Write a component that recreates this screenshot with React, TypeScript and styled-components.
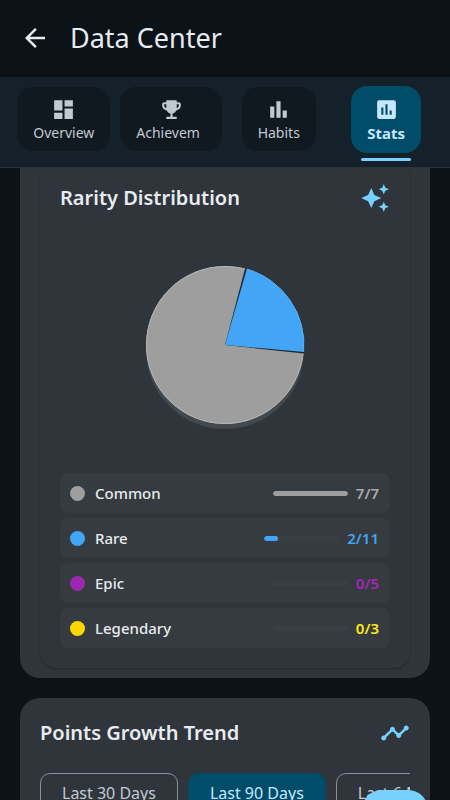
import React from "react";
import styled, { createGlobalStyle, css } from "styled-components";

const color = {
  page: "#0b1218",
  bar: "#15212a",
  tab: "#101820",
  active: "#004c69",
  accent: "#77d1ff",
  card: "#2f353b",
  row: "#353b3e",
  text: "#e7ecf1",
  muted: "#c3c9d1",
};

const GlobalStyle = createGlobalStyle`
  * { box-sizing: border-box; }
  body {
    margin: 0;
    background: ${color.page};
    color: ${color.text};
    font-family: "Noto Sans", "Open Sans", sans-serif;
  }
  button { font: inherit; color: inherit; border: 0; margin: 0; cursor: pointer; }
`;

const Screen = styled.div`
  height: 100vh;
  display: flex;
  flex-direction: column;
  overflow: hidden;
  position: relative;
`;

const AppBar = styled.header`
  flex: none;
  display: flex;
  align-items: center;
  gap: 20px;
  height: 77px;
  padding: 0 20px 2px;
`;

const IconButton = styled.button`
  display: flex;
  padding: 0;
  background: none;
`;

const PageTitle = styled.h1`
  margin: 0;
  font-size: 27px;
  line-height: 36px;
  font-weight: 400;
`;

const TabBar = styled.nav`
  flex: none;
  display: grid;
  grid-template-columns: repeat(4, 1fr);
  height: 91px;
  padding: 0 10px;
  background: ${color.bar};
  border-bottom: 1px solid #2a3339;
`;

const TabSlot = styled.div`
  display: flex;
  flex-direction: column;
  align-items: center;
  justify-content: center;
  position: relative;
  padding-bottom: 6px;
`;

const TabButton = styled.button<{ $active?: boolean }>`
  display: flex;
  flex-direction: column;
  align-items: center;
  gap: 1px;
  height: 64px;
  padding: 10px 16px 0;
  border-radius: 16px;
  background: ${color.tab};
  color: ${color.muted};
  font-size: 14px;
  line-height: 20px;
  ${(p) =>
    p.$active &&
    css`
      height: 67px;
      padding-top: 11px;
      background: ${color.active};
      color: #c5e8ff;
      font-size: 15px;
      font-weight: 700;
    `}
`;

const TabLabel = styled.span<{ $wide?: boolean }>`
  min-width: ${(p) => (p.$wide ? "70px" : "0")};
  text-align: left;
`;

const Indicator = styled.span`
  position: absolute;
  bottom: 6px;
  width: 50px;
  height: 3px;
  border-radius: 2px;
  background: ${color.accent};
`;

const Content = styled.main`
  flex: 1;
  min-height: 0;
  display: flex;
  flex-direction: column;
  gap: 20px;
  padding: 0 20px;
  overflow: hidden;
`;

const Card = styled.section<{ $continued?: boolean }>`
  flex: none;
  padding: ${(p) => (p.$continued ? "0 20px 10px" : "20px")};
  border-radius: ${(p) => (p.$continued ? "0 0 20px 20px" : "20px")};
  background: ${color.card};
`;

const Panel = styled.div`
  padding: 15px 20px 20px;
  border-radius: 8px 8px 16px 16px;
  background: ${color.card};
  box-shadow: 0 1px 2px rgba(0, 0, 0, 0.25);
`;

const CardHeader = styled.div`
  display: flex;
  align-items: center;
  justify-content: space-between;
  height: 30px;
`;

const CardTitle = styled.h2`
  margin: 0;
  font-size: 20px;
  line-height: 30px;
  font-weight: 600;
`;

const ChartArea = styled.div`
  display: flex;
  justify-content: center;
  padding: 50px 0 40px;
`;

const Legend = styled.ul`
  display: flex;
  flex-direction: column;
  gap: 5px;
  margin: 0;
  padding: 0;
  list-style: none;
`;

const LegendRow = styled.li`
  display: flex;
  align-items: center;
  height: 40px;
  padding: 0 11px 0 10px;
  border-radius: 8px;
  background: ${color.row};
`;

const Dot = styled.span<{ $color: string }>`
  width: 15px;
  height: 15px;
  margin-right: 10px;
  border-radius: 50%;
  background: ${(p) => p.$color};
`;

const RarityName = styled.span`
  flex: 1;
  font-size: 15px;
  line-height: 20px;
  font-weight: 500;
`;

const Track = styled.span`
  width: 75px;
  height: 5px;
  margin-right: 8px;
  border-radius: 3px;
  background: #393f42;
  overflow: hidden;
`;

const Fill = styled.span<{ $color: string }>`
  display: block;
  height: 100%;
  border-radius: 3px;
  background: ${(p) => p.$color};
`;

const Count = styled.span<{ $color: string }>`
  font-size: 15px;
  line-height: 20px;
  font-weight: 600;
  color: ${(p) => p.$color};
`;

const ChipRow = styled.div`
  display: flex;
  gap: 10px;
  margin-top: 25px;
  overflow-x: auto;
  scrollbar-width: none;
`;

const Chip = styled.button<{ $active?: boolean }>`
  flex: none;
  height: 40px;
  padding: 0 21px;
  border: 1px solid ${(p) => (p.$active ? color.active : "#8b9198")};
  border-radius: 10px;
  background: ${(p) => (p.$active ? color.active : "transparent")};
  color: ${(p) => (p.$active ? "#c5e8ff" : color.muted)};
  font-size: 16px;
  line-height: 20px;
  white-space: nowrap;
`;

const FloatingButton = styled.button`
  position: absolute;
  right: 22px;
  bottom: -56px;
  width: 66px;
  height: 66px;
  border-radius: 20px;
  background: ${color.accent};
`;

const paths = {
  back: "M20 11H7.83l5.59-5.59L12 4l-8 8 8 8 1.41-1.41L7.83 13H20v-2z",
  dashboard: "M3 13h8V3H3v10zm0 8h8v-6H3v6zm10 0h8V11h-8v10zm0-18v6h8V3h-8z",
  trophy:
    "M19 5h-2V3H7v2H5c-1.1 0-2 .9-2 2v1c0 2.55 1.92 4.63 4.39 4.94.63 1.5 1.98 2.63 3.61 2.96V19H7v2h10v-2h-4v-3.1c1.63-.33 2.98-1.46 3.61-2.96C19.08 12.63 21 10.55 21 8V7c0-1.1-.9-2-2-2zM5 8V7h2v3.82C5.84 10.4 5 9.3 5 8zm14 0c0 1.3-.84 2.4-2 2.82V7h2v1z",
  bars: "M4 9h4v11H4zm12 4h4v7h-4zm-6-9h4v16h-4z",
  stats:
    "M19 3H5c-1.1 0-2 .9-2 2v14c0 1.1.9 2 2 2h14c1.1 0 2-.9 2-2V5c0-1.1-.9-2-2-2zM9 17H7v-7h2v7zm4 0h-2V7h2v10zm4 0h-2v-4h2v4z",
  sparkle:
    "M19 9l1.25-2.75L23 5l-2.75-1.25L19 1l-1.25 2.75L15 5l2.75 1.25L19 9zm-7.5.5L9 4 6.5 9.5 1 12l5.5 2.5L9 20l2.5-5.5L17 12l-5.5-2.5zM19 15l-1.25 2.75L15 19l2.75 1.25L19 23l1.25-2.75L23 19l-2.75-1.25L19 15z",
  trend:
    "M23 8c0 1.1-.9 2-2 2-.18 0-.35-.02-.51-.07l-3.56 3.55c.05.16.07.34.07.52 0 1.1-.9 2-2 2s-2-.9-2-2c0-.18.02-.36.07-.52l-2.55-2.55c-.16.05-.34.07-.52.07s-.36-.02-.52-.07l-4.55 4.56c.05.16.07.33.07.51 0 1.1-.9 2-2 2s-2-.9-2-2 .9-2 2-2c.18 0 .35.02.51.07l4.56-4.55C8.02 9.36 8 9.18 8 9c0-1.1.9-2 2-2s2 .9 2 2c0 .18-.02.36-.07.52l2.55 2.55c.16-.05.34-.07.52-.07s.36.02.52.07l3.55-3.56C19.02 8.35 19 8.18 19 8c0-1.1.9-2 2-2s2 .9 2 2z",
};

function Icon({ name, size, fill = "currentColor" }: { name: keyof typeof paths; size: number; fill?: string }) {
  return (
    <svg width={size} height={size} viewBox="0 0 24 24" fill={fill} aria-hidden="true">
      <path d={paths[name]} />
    </svg>
  );
}

function RarityPie() {
  return (
    <svg width="166" height="170" viewBox="-83 -82 166 170" role="img" aria-label="Rarity pie chart">
      <circle cy="5" r="79" fill="#434a4e" />
      <circle r="79" fill="#9e9e9e" />
      <circle r="78.5" fill="none" stroke="#b4b4b4" />
      <path d="M0 0L20.2 -76.9A79.5 79.5 0 0 1 79 8.6Z" fill="#1d262e" />
      <path d="M0 0L21.8 -75.9A79 79 0 0 1 78.7 6.9Z" fill="#42a5f5" />
      <path d="M21.8 -75.9A79 79 0 0 1 78.7 6.9" fill="none" stroke="#5ab3f8" />
    </svg>
  );
}

const tabs: { label: string; icon: keyof typeof paths; active?: boolean; wide?: boolean }[] = [
  { label: "Overview", icon: "dashboard" },
  { label: "Achievem", icon: "trophy", wide: true },
  { label: "Habits", icon: "bars" },
  { label: "Stats", icon: "stats", active: true },
];

const rarities = [
  { name: "Common", got: 7, total: 7, color: "#9e9e9e", countColor: "#aaa8a8" },
  { name: "Rare", got: 2, total: 11, color: "#42a5f5", countColor: "#42a5f5" },
  { name: "Epic", got: 0, total: 5, color: "#9c27b0", countColor: "#a527ba" },
  { name: "Legendary", got: 0, total: 3, color: "#ffd600", countColor: "#ffe81a" },
];

const ranges = ["Last 30 Days", "Last 90 Days", "Last 6 Months"];

export default function App() {
  return (
    <>
      <GlobalStyle />
      <Screen>
        <AppBar>
          <IconButton aria-label="Back">
            <Icon name="back" size={30} />
          </IconButton>
          <PageTitle>Data Center</PageTitle>
        </AppBar>
        <TabBar>
          {tabs.map((t) => (
            <TabSlot key={t.label}>
              <TabButton $active={t.active} aria-current={t.active ? "page" : undefined}>
                <Icon name={t.icon} size={25} />
                <TabLabel $wide={t.wide}>{t.label}</TabLabel>
              </TabButton>
              {t.active && <Indicator />}
            </TabSlot>
          ))}
        </TabBar>
        <Content>
          <Card $continued>
            <Panel>
              <CardHeader>
                <CardTitle>Rarity Distribution</CardTitle>
                <Icon name="sparkle" size={30} fill={color.accent} />
              </CardHeader>
              <ChartArea>
                <RarityPie />
              </ChartArea>
              <Legend>
                {rarities.map((r) => (
                  <LegendRow key={r.name}>
                    <Dot $color={r.color} />
                    <RarityName>{r.name}</RarityName>
                    <Track>
                      <Fill $color={r.color} style={{ width: `${(r.got / r.total) * 100}%` }} />
                    </Track>
                    <Count $color={r.countColor}>
                      {r.got}/{r.total}
                    </Count>
                  </LegendRow>
                ))}
              </Legend>
            </Panel>
          </Card>
          <Card>
            <CardHeader>
              <CardTitle>Points Growth Trend</CardTitle>
              <Icon name="trend" size={30} fill={color.accent} />
            </CardHeader>
            <ChipRow>
              {ranges.map((r, i) => (
                <Chip key={r} $active={i === 1} aria-pressed={i === 1}>
                  {r}
                </Chip>
              ))}
            </ChipRow>
          </Card>
        </Content>
        <FloatingButton aria-label="Add" />
      </Screen>
    </>
  );
}
